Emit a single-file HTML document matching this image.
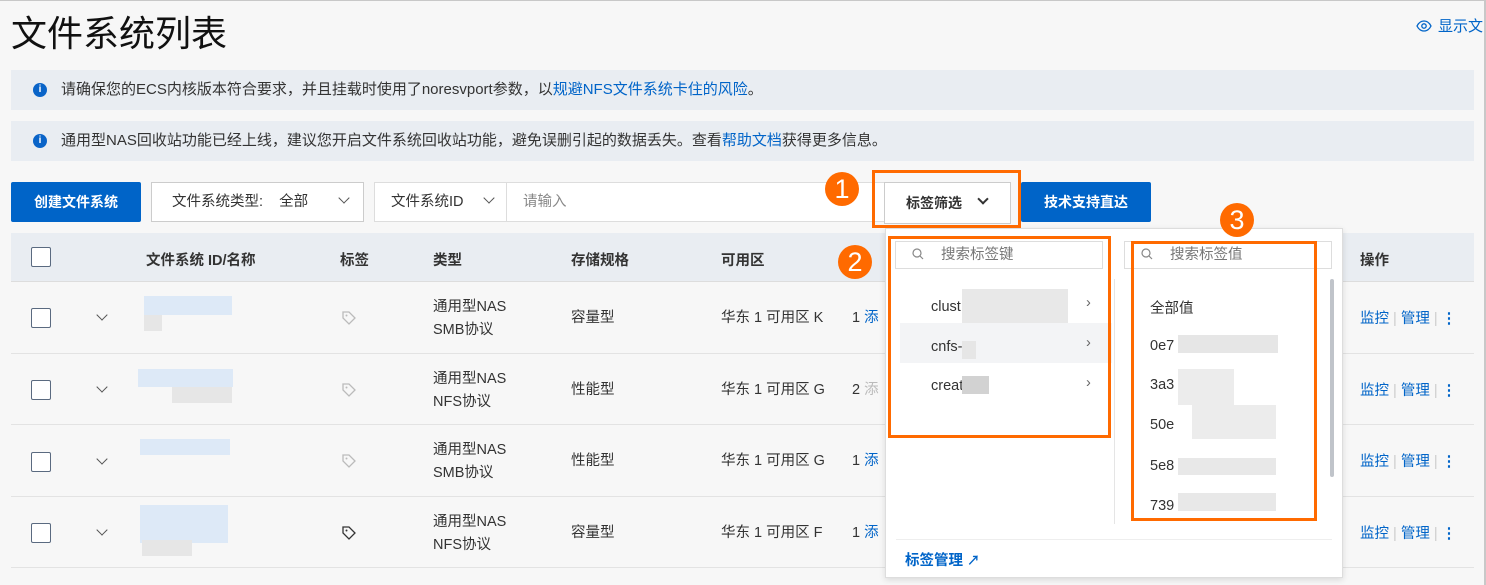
<!DOCTYPE html>
<html><head><meta charset="utf-8"><style>
*{box-sizing:border-box;margin:0;padding:0}
body{width:1486px;height:585px;overflow:hidden;background:#f7f7f7;font-family:"Liberation Sans","Noto Sans CJK SC",sans-serif;color:#333;position:relative;font-size:14px}
.a{position:absolute}
.frame{position:absolute;left:0;top:0;width:1486px;height:585px;border-top:1px solid #c8c8c8;border-right:2px solid #c8c8c8;pointer-events:none}
.ban{position:absolute;left:11px;width:1463px;height:40px;background:#e9edf2;font-size:15px;line-height:40px;padding-left:50px;color:#333}
.ban i{position:absolute;left:22px;top:13px;width:14px;height:14px;border-radius:50%;background:#0a64c8;color:#fff;font-style:normal;font-size:10px;line-height:14px;text-align:center;font-weight:bold}
.lk{color:#0064c8}
.cb{position:absolute;width:20px;height:20px;border:1px solid #5a6a80;border-radius:2px;background:#fff}
.th{position:absolute;top:249px;font-weight:bold;font-size:14.5px;color:#333}
.row{position:absolute;left:11px;width:1463px;border-bottom:1px solid #e3e3e3}
.c{position:absolute;font-size:14.5px;color:#333;line-height:23px}
.bl{position:absolute;background:#dde9f7}
.gr{position:absolute;background:#e6e6e6}
.orange{position:absolute;border:3px solid #ff6a00}
.num{position:absolute;width:34px;height:34px;border-radius:50%;background:#ff6a00;color:#fff;font-size:27px;text-align:center;line-height:34px}
.chev{position:absolute;width:8px;height:8px;border-right:1.5px solid #555;border-bottom:1.5px solid #555;transform:rotate(45deg)}
.ops{position:absolute;left:1360px;font-size:14.5px;color:#0064c8}
</style></head><body>
<div class="a" style="left:11px;top:5px;font-size:36px;color:#111">文件系统列表</div>
<div class="a" style="left:1416px;top:15px;font-size:15px;color:#0064c8"><svg width="16" height="12" viewBox="0 0 16 12" style="vertical-align:-1px;margin-right:6px"><path d="M1 6C3 2 6 1 8 1s5 1 7 5c-2 4-5 5-7 5S3 10 1 6z" fill="none" stroke="#0064c8" stroke-width="1.3"/><circle cx="8" cy="6" r="2.2" fill="none" stroke="#0064c8" stroke-width="1.3"/></svg>显示文</div>
<div class="ban" style="top:70px"><i>i</i>请确保您的ECS内核版本符合要求，并且挂载时使用了noresvport参数，以<span class="lk">规避NFS文件系统卡住的风险</span>。</div>
<div class="ban" style="top:121px"><i>i</i>通用型NAS回收站功能已经上线，建议您开启文件系统回收站功能，避免误删引起的数据丢失。查看<span class="lk">帮助文档</span>获得更多信息。</div>

<div class="a" style="left:11px;top:182px;width:130px;height:40px;background:#0064c8;border-radius:2px;color:#fff;font-weight:bold;text-align:center;line-height:40px">创建文件系统</div>
<div class="a" style="left:151px;top:182px;width:213px;height:40px;border:1px solid #ccc;background:#fff;line-height:38px;padding-left:20px;color:#333;font-size:14.5px">文件系统类型: &nbsp; &nbsp;全部<span class="chev" style="left:188px;top:11px"></span></div>
<div class="a" style="left:374px;top:182px;width:520px;height:40px;border:1px solid #ddd;background:#fff;line-height:38px;padding-left:16px;font-size:14.5px">文件系统ID<span class="chev" style="left:110px;top:11px"></span><span class="a" style="left:131px;top:0;height:38px;border-left:1px solid #ddd"></span><span class="a" style="left:148px;color:#888">请输入</span></div>
<div class="a" style="left:884px;top:182px;width:127px;height:42px;border:1px solid #ccc;background:#fff;line-height:40px;padding-left:21px;font-weight:bold">标签筛选<span class="chev" style="left:94px;top:12px;border-color:#333;border-width:2px"></span></div>
<div class="a" style="left:1021px;top:182px;width:130px;height:40px;background:#0064c8;border-radius:2px;color:#fff;font-weight:bold;text-align:center;line-height:40px">技术支持直达</div>

<div class="a" style="left:11px;top:233px;width:1463px;height:49px;background:#e9edf2;border-bottom:1px solid #ddd"></div>
<div class="cb" style="left:31px;top:247px"></div>
<div class="th" style="left:146px">文件系统 ID/名称</div>
<div class="th" style="left:340px">标签</div>
<div class="th" style="left:433px">类型</div>
<div class="th" style="left:571px">存储规格</div>
<div class="th" style="left:721px">可用区</div>
<div class="th" style="left:1360px">操作</div>

<div class="row" style="top:282px;height:72px"></div>
<div class="row" style="top:354px;height:71px"></div>
<div class="row" style="top:425px;height:72px"></div>
<div class="row" style="top:497px;height:71px"></div>

<div class="cb" style="left:31px;top:308px"></div><div class="chev" style="left:98px;top:311px"></div>
<div class="bl" style="left:144px;top:296px;width:88px;height:19px"></div><div class="gr" style="left:144px;top:315px;width:18px;height:16px"></div>
<div class="c" style="left:433px;top:296px">通用型NAS<br>SMB协议</div><div class="c" style="left:571px;top:307px">容量型</div><div class="c" style="left:721px;top:307px">华东 1 可用区 K</div><div class="c" style="left:852px;top:307px">1 <span class="lk">添</span></div>
<div class="cb" style="left:31px;top:380px"></div><div class="chev" style="left:98px;top:383px"></div>
<div class="bl" style="left:138px;top:369px;width:95px;height:18px"></div><div class="gr" style="left:172px;top:387px;width:60px;height:16px"></div>
<div class="c" style="left:433px;top:368px">通用型NAS<br>NFS协议</div><div class="c" style="left:571px;top:379px">性能型</div><div class="c" style="left:721px;top:379px">华东 1 可用区 G</div><div class="c" style="left:852px;top:379px">2 <span style="color:#bbb">添</span></div>
<div class="cb" style="left:31px;top:452px"></div><div class="chev" style="left:98px;top:455px"></div>
<div class="bl" style="left:140px;top:439px;width:90px;height:16px"></div>
<div class="c" style="left:433px;top:439px">通用型NAS<br>SMB协议</div><div class="c" style="left:571px;top:450px">性能型</div><div class="c" style="left:721px;top:450px">华东 1 可用区 G</div><div class="c" style="left:852px;top:450px">1 <span class="lk">添</span></div>
<div class="cb" style="left:31px;top:523px"></div><div class="chev" style="left:98px;top:526px"></div>
<div class="bl" style="left:140px;top:505px;width:88px;height:38px"></div><div class="gr" style="left:142px;top:540px;width:50px;height:16px"></div>
<div class="c" style="left:433px;top:511px">通用型NAS<br>NFS协议</div><div class="c" style="left:571px;top:522px">容量型</div><div class="c" style="left:721px;top:522px">华东 1 可用区 F</div><div class="c" style="left:852px;top:522px">1 <span class="lk">添</span></div>

<div class="ops" style="top:307px">监控 <span style="color:#ccc">|</span> 管理 <span style="color:#ccc">|</span> <b>⋮</b></div>
<div class="ops" style="top:379px">监控 <span style="color:#ccc">|</span> 管理 <span style="color:#ccc">|</span> <b>⋮</b></div>
<div class="ops" style="top:450px">监控 <span style="color:#ccc">|</span> 管理 <span style="color:#ccc">|</span> <b>⋮</b></div>
<div class="ops" style="top:522px">监控 <span style="color:#ccc">|</span> 管理 <span style="color:#ccc">|</span> <b>⋮</b></div>
<svg class="a" style="left:341px;top:310px" width="16" height="16" viewBox="0 0 16 16"><path d="M2 2h6l6 6-6 6-6-6z" fill="none" stroke="#bbb" stroke-width="1.3"/><circle cx="5.5" cy="5.5" r="1" fill="#bbb"/></svg>
<svg class="a" style="left:341px;top:382px" width="16" height="16" viewBox="0 0 16 16"><path d="M2 2h6l6 6-6 6-6-6z" fill="none" stroke="#bbb" stroke-width="1.3"/><circle cx="5.5" cy="5.5" r="1" fill="#bbb"/></svg>
<svg class="a" style="left:341px;top:453px" width="16" height="16" viewBox="0 0 16 16"><path d="M2 2h6l6 6-6 6-6-6z" fill="none" stroke="#bbb" stroke-width="1.3"/><circle cx="5.5" cy="5.5" r="1" fill="#bbb"/></svg>
<svg class="a" style="left:341px;top:525px" width="16" height="16" viewBox="0 0 16 16"><path d="M2 2h6l6 6-6 6-6-6z" fill="none" stroke="#333" stroke-width="1.3"/><circle cx="5.5" cy="5.5" r="1" fill="#333"/></svg>

<div class="a" style="left:885px;top:228px;width:458px;height:350px;background:#fff;border:1px solid #ddd;box-shadow:0 2px 6px rgba(0,0,0,.12);font-size:14.5px">
 <div class="a" style="left:9px;top:12px;width:208px;height:28px;border:1px solid #ddd;line-height:26px;padding-left:45px;color:#777">搜索标签键</div>
 <div class="a" style="left:238px;top:12px;width:208px;height:28px;border:1px solid #ddd;line-height:26px;padding-left:45px;color:#777">搜索标签值</div>
 <div class="a" style="left:14px;top:94px;width:212px;height:40px;background:#f3f4f6"></div>
 <div class="a" style="left:45px;top:70px;color:#333">clust</div><div class="gr" style="left:76px;top:60px;width:106px;height:34px;background:#e8e8e8"></div>
 <div class="a" style="left:45px;top:110px">cnfs-</div><div class="gr" style="left:76px;top:112px;width:14px;height:18px"></div>
 <div class="a" style="left:45px;top:149px">creat</div><div class="gr" style="left:76px;top:147px;width:27px;height:18px;background:#d2d2d2"></div>
 <div class="a" style="left:200px;top:66px;color:#666">›</div><div class="a" style="left:200px;top:106px;color:#666">›</div><div class="a" style="left:200px;top:146px;color:#666">›</div>
 <div class="a" style="left:228px;top:50px;height:245px;border-left:1px solid #e5e5e5"></div>
 <div class="a" style="left:264px;top:68px">全部值</div>
 <div class="a" style="left:264px;top:109px">0e7</div><div class="gr" style="left:292px;top:106px;width:100px;height:18px"></div>
 <div class="a" style="left:264px;top:148px">3a3</div><div class="gr" style="left:292px;top:140px;width:56px;height:36px;background:#ececec"></div>
 <div class="a" style="left:264px;top:188px">50e</div><div class="gr" style="left:306px;top:176px;width:84px;height:34px;background:#ececec"></div>
 <div class="a" style="left:264px;top:229px">5e8</div><div class="gr" style="left:292px;top:229px;width:98px;height:17px;background:#e8e8e8"></div>
 <div class="a" style="left:264px;top:269px">739</div><div class="gr" style="left:292px;top:264px;width:98px;height:18px;background:#e8e8e8"></div>
 <div class="a" style="left:444px;top:50px;width:4px;height:198px;background:#c0c4ca;border-radius:2px"></div>
 <div class="a" style="left:10px;top:310px;width:436px;border-top:1px solid #eee"></div>
 <div class="a" style="left:19px;top:320px;color:#0064c8;font-weight:bold">标签管理 <span style="font-size:13px">↗</span></div>
</div>
<svg class="a" style="left:912px;top:248px" width="12" height="12" viewBox="0 0 12 12"><circle cx="5" cy="5" r="4" fill="none" stroke="#888" stroke-width="1.2"/><path d="M8 8l3 3" stroke="#888" stroke-width="1.2"/></svg>
<svg class="a" style="left:1141px;top:248px" width="12" height="12" viewBox="0 0 12 12"><circle cx="5" cy="5" r="4" fill="none" stroke="#888" stroke-width="1.2"/><path d="M8 8l3 3" stroke="#888" stroke-width="1.2"/></svg>

<div class="orange" style="left:872px;top:170px;width:149px;height:58px"></div>
<div class="orange" style="left:888px;top:236px;width:223px;height:202px"></div>
<div class="orange" style="left:1131px;top:241px;width:186px;height:280px"></div>
<div class="num" style="left:825px;top:172px">1</div>
<div class="num" style="left:838px;top:245px">2</div>
<div class="num" style="left:1220px;top:203px">3</div>
<div class="frame"></div>
</body></html>
